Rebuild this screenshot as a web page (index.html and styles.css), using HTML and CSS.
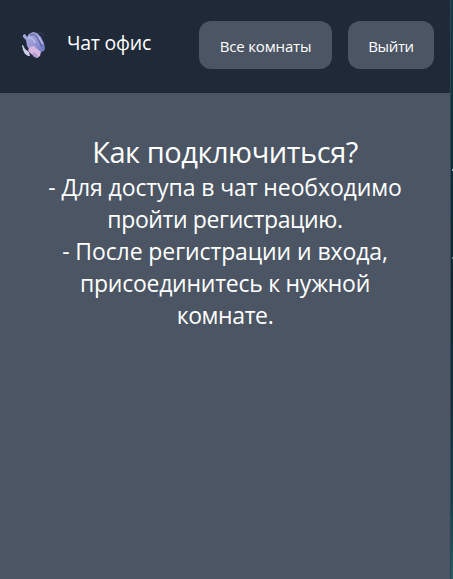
FILE: index.html
```html
<!DOCTYPE html>
<html lang="ru">
<head>
<meta charset="utf-8">
<title>Чат офис</title>
<link rel="stylesheet" href="styles.css">
</head>
<body>
<div class="page">
  <nav class="navbar">
    <a class="brand">
      <svg class="logo" viewBox="0 0 24 28">
        <defs>
          <linearGradient id="wing" x1="0" y1="0" x2="1" y2=".7">
            <stop offset="0" stop-color="#a9ace0"/>
            <stop offset=".55" stop-color="#9a99d6"/>
            <stop offset="1" stop-color="#707cc4"/>
          </linearGradient>
        </defs>
        <path fill="url(#wing)" d="M1 4L3 3L5 6L7 3L11 1L15 2L19 6L22 12L23 17L22 20L19 21L17 23L12 21L7 18L5 15L4 9L1 6Z"/>
        <path fill="#d9b5e1" d="M8 16L12 15L15 18L19 21L18 25L15 27L12 25L8 22L6 19Z"/>
        <path fill="#b59fd8" d="M12 21L15 23L16 27L12 26L10 23Z"/>
        <path fill="#d0cfeb" d="M0 14L1 14L3 18L7 21L8 25L6 25L3 23L1 19Z"/>
        <path fill="none" stroke="#4b568f" stroke-width="1" d="M8 4Q12 2 15 6L20 16"/>
        <path fill="none" stroke="#c4bfef" stroke-width="1.200" d="M6 7Q11 6 13 12M16 5L21 13"/>
        <path fill="none" stroke="#44507e" stroke-width=".6" d="M16 2Q20 1 22 5"/>
      </svg>
      <span class="brand-name">Чат офис</span>
    </a>
    <div class="actions">
      <a class="button rooms">Все комнаты</a>
      <a class="button logout">Выйти</a>
    </div>
  </nav>
  <main class="content">
    <h1>Как подключиться?</h1>
    <p class="login-step">- Для доступа в чат необходимо<br><span class="tight">пройти регистрацию.</span></p>
    <p class="join-step">- После регистрации и входа,<br><span class="snug">присоединитесь к нужной</span><br><span class="tight">комнате.</span></p>
  </main>
</div>
<div class="backdrop"></div>
</body>
</html>
```
FILE: styles.css
```css
* { box-sizing: border-box; }
body {
  display: flex;
  height: 579px;
  margin: 0;
  overflow: hidden;
  color: #fff;
  background: #4b5563;
  font-family: "Open Sans", "Noto Sans", sans-serif;
}
.page { width: 450px; }
.backdrop {
  width: 3px;
  background:
    radial-gradient(circle at 2px 170px, #9fb3bd 0 1px, transparent 1.5px),
    radial-gradient(circle at 2px 258px, #718991 0 1px, transparent 1.5px),
    linear-gradient(#163d4b, #0d303c 20%, #142733 50%, #172e3d 70%, #174351 88%, #265c66);
  border-left: 1px solid #30434f;
}
.navbar {
  display: flex;
  align-items: flex-start;
  justify-content: space-between;
  height: 93px;
  padding: 21px 16px 0 22px;
  background: #1f2937;
}
.brand { display: flex; padding-top: 10px; }
.logo { width: 24px; height: 28px; }
.brand-name {
  margin: -2px 0 0 21px;
  font-size: 19.5px;
  letter-spacing: -.25px;
  line-height: 28px;
  white-space: nowrap;
}
.actions { display: flex; gap: 16px; }
.button {
  height: 48px;
  padding-top: 1px;
  border-radius: 12px;
  background: #4b5563;
  font-size: 15px;
  letter-spacing: -.15px;
  line-height: 48px;
  text-align: center;
  white-space: nowrap;
}
.rooms { width: 133px; }
.logout { width: 86px; letter-spacing: -.35px; }
.content { padding-top: 41px; text-align: center; white-space: nowrap; }
h1, p { margin: 0; font-weight: 400; }
h1 {
  margin-bottom: 1px;
  font-size: 29px;
  letter-spacing: -.45px;
  line-height: 36px;
}
p {
  font-size: 23px;
  letter-spacing: -.1px;
  line-height: 32px;
}
.tight { letter-spacing: -.38px; }
.snug { letter-spacing: -.25px; }
```
